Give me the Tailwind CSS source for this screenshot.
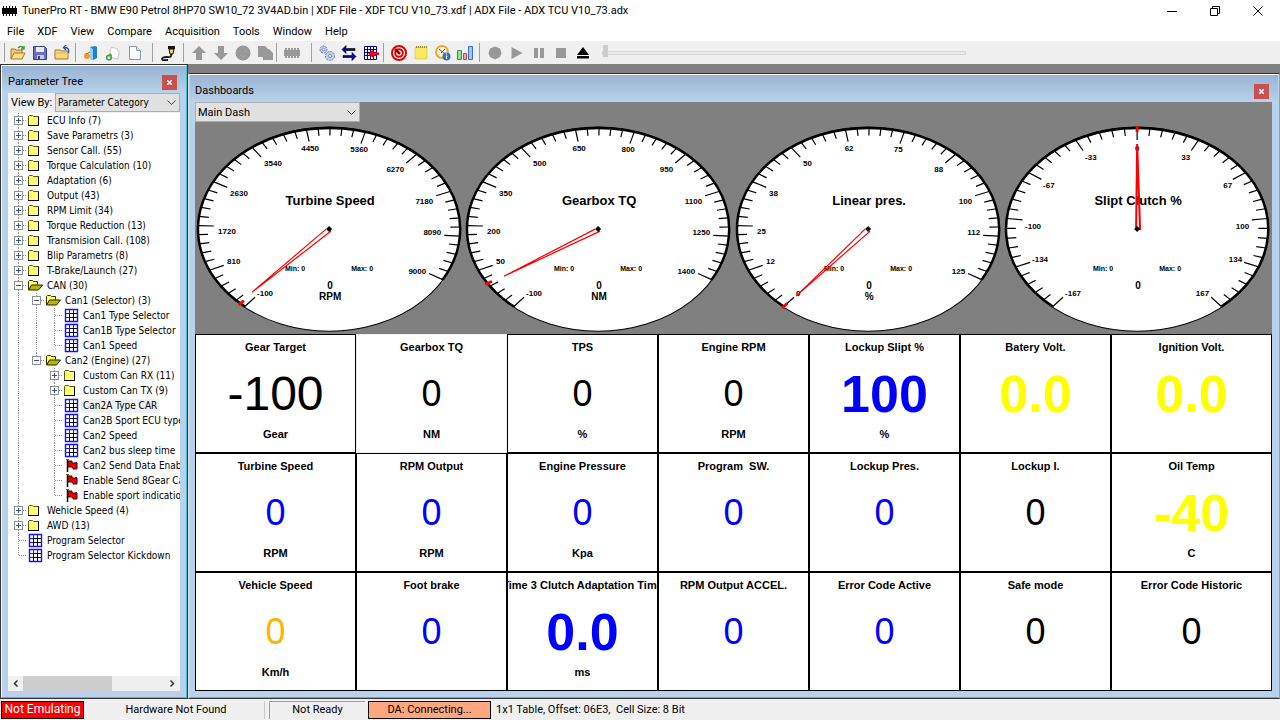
<!DOCTYPE html>
<html lang="en">
<head>
    <meta charset="UTF-8">
    <meta name="viewport" content="width=device-width, initial-scale=1.0">
    <title>TunerPro RT</title>
    <script src="https://cdn.jsdelivr.net/npm/@tailwindcss/browser@4"></script>
</head>
<body class="flex h-screen flex-col overflow-hidden bg-white font-['Roboto',sans-serif] text-[11px] leading-4 text-black">

    <!-- Title bar -->
    <header class="flex h-[22px] shrink-0 items-center">
        <svg class="ml-[2px] mr-[5px] h-4 w-[15px]" viewBox="0 0 15 16" shape-rendering="crispEdges">
            <path d="M0 5h15v6H0zM1 3h1v10H1zM4 3h1v10H4zM7 3h1v10H7zM10 3h1v10h-1zM13 3h1v10h-1z" fill="#000"/>
        </svg>
        <h1>TunerPro RT - BMW E90 Petrol 8HP70 SW10_72 3V4AD.bin | XDF File - XDF TCU V10_73.xdf | ADX File - ADX TCU V10_73.adx</h1>
        <div class="ml-auto flex">
            <button aria-label="Minimize" class="flex h-5 w-[43px] items-center justify-center">
                <svg class="h-[11px] w-[11px]" viewBox="0 0 11 11"><path d="M0 5.5h10" stroke="#000"/></svg>
            </button>
            <button aria-label="Restore" class="flex h-5 w-[43px] items-center justify-center">
                <svg class="h-[11px] w-[11px]" viewBox="0 0 11 11"><path d="M.5 2.5h7v7h-7zM2.500 2.500v-2h7v7h-2" fill="none" stroke="#000"/></svg>
            </button>
            <button aria-label="Close" class="flex h-5 w-[43px] items-center justify-center">
                <svg class="h-[11px] w-[11px]" viewBox="0 0 11 11"><path d="M.5.5l9 9M9.500.5l-9 9" stroke="#000"/></svg>
            </button>
        </div>
    </header>

    <!-- Menu -->
    <nav class="flex h-[19px] shrink-0 items-center gap-[13px] pl-[7px]">
        <button>File</button>
        <button>XDF</button>
        <button>View</button>
        <button>Compare</button>
        <button>Acquisition</button>
        <button>Tools</button>
        <button>Window</button>
        <button>Help</button>
    </nav>

    <!-- Toolbar -->
    <div id="toolbar" class="flex h-[23px] shrink-0 items-center bg-[#f0f0f0] pl-1"></div>

    <main class="flex min-h-0 flex-1 bg-[#808080]">

        <!-- Parameter tree -->
        <aside class="flex w-[188px] shrink-0 border border-[#333]">
            <div class="flex min-w-0 flex-1 flex-col border border-t-white border-r-[#3cc3dc] border-b-[#3cc3dc] border-l-white bg-[#b9d1ea] px-[6px] pb-[6px]">
                <div class="-mx-[6px] flex h-[27px] shrink-0 items-center justify-between bg-linear-to-b from-[#99b4d1] to-[#b9d1ea] pr-[9px] pl-[6px] pt-[5px]">
                    <h2>Parameter Tree</h2>
                    <button aria-label="Close parameter tree" class="flex h-[15px] w-[15px] items-center justify-center bg-[#c75050]">
                        <svg class="h-[5px] w-[5px]" viewBox="0 0 5 5"><path d="M0 0l5 5M5 0L0 5" stroke="#fff" stroke-width="1.500"/></svg>
                    </button>
                </div>
                <div class="flex h-5 shrink-0 bg-[#f0f0f0]">
                    <label for="viewBy" class="w-[47px] shrink-0 pt-[2px] pl-[3px] whitespace-nowrap">View By:</label>
                    <div class="relative flex-1">
                        <select id="viewBy" class="h-[19px] w-full appearance-none border border-[#adadad] bg-[#e1e1e1] pl-[2px] font-['DejaVu_Sans_Condensed','DejaVu_Sans',sans-serif] text-[10px]">
                            <option>Parameter Category</option>
                        </select>
                        <svg class="pointer-events-none absolute top-[7px] right-1 h-[5px] w-[9px]" viewBox="0 0 9 5"><path d="M.5.5l4 4 4-4" fill="none" stroke="#444"/></svg>
                    </div>
                </div>
                <ul id="tree" class="min-h-0 flex-1 overflow-hidden bg-white pl-px font-['DejaVu_Sans_Condensed','DejaVu_Sans',sans-serif] text-[10px]"></ul>
                <div class="flex h-[15px] shrink-0 bg-[#f0f0f0]">
                    <button aria-label="Scroll left" class="flex w-[15px] items-center justify-center">
                        <svg class="h-[7px] w-[5px]" viewBox="0 0 5 7"><path d="M4.500.5l-3 3 3 3" fill="none" stroke="#333" stroke-width="1.500"/></svg>
                    </button>
                    <div class="flex-1"><div class="h-full w-[63%] bg-[#cdcdcd]"></div></div>
                    <button aria-label="Scroll right" class="flex w-[15px] items-center justify-center">
                        <svg class="h-[7px] w-[5px]" viewBox="0 0 5 7"><path d="M.5.5l3 3-3 3" fill="none" stroke="#333" stroke-width="1.500"/></svg>
                    </button>
                </div>
            </div>
        </aside>

        <!-- Dashboards -->
        <section class="mt-[9px] flex min-w-0 flex-1 border border-t-[#333] border-r-[#3cc3dc] border-b-[#333] border-l-[#ddd]">
            <div class="flex min-w-0 flex-1 flex-col border border-t-white border-r-[#b9d1ea] border-b-[#3cc3dc] border-l-[#b9d1ea] bg-[#b9d1ea] pr-[6px] pb-[6px] pl-[5px]">
                <div class="-mr-[6px] -ml-[5px] flex h-[27px] shrink-0 items-center justify-between bg-linear-to-b from-[#99b4d1] to-[#b9d1ea] pr-[9px] pl-[5px] pt-[5px]">
                    <h2>Dashboards</h2>
                    <button aria-label="Close dashboards" class="flex h-[15px] w-[15px] items-center justify-center bg-[#c75050]">
                        <svg class="h-[5px] w-[5px]" viewBox="0 0 5 5"><path d="M0 0l5 5M5 0L0 5" stroke="#fff" stroke-width="1.500"/></svg>
                    </button>
                </div>
                <div class="flex min-h-0 flex-1 flex-col bg-[#808080]">
                    <div class="relative h-5 w-[165px] shrink-0">
                        <select aria-label="Dashboard" class="h-5 w-full appearance-none border border-[#adadad] bg-[#e1e1e1] pt-px pl-[2px]">
                            <option>Main Dash</option>
                        </select>
                        <svg class="pointer-events-none absolute top-2 right-1 h-[5px] w-[9px]" viewBox="0 0 9 5"><path d="M.5.5l4 4 4-4" fill="none" stroke="#444"/></svg>
                    </div>
                    <div id="gauges" class="grid shrink-0 grid-cols-4 font-['Liberation_Sans',sans-serif]"></div>
                    <div id="cells" class="grid min-h-0 flex-1 grid-cols-[161fr_151fr_151fr_151fr_151fr_151fr_161fr] grid-rows-3 font-['Liberation_Sans',sans-serif]"></div>
                </div>
            </div>
        </section>
    </main>

    <!-- Status bar -->
    <footer class="flex h-[21px] shrink-0 gap-1 bg-[#f0f0f0] pt-[2px] pb-px pl-px leading-4">
        <div class="w-[83px] border border-black bg-[#ff0000] text-center text-[12px] leading-[14px] text-white">Not Emulating</div>
        <div class="w-[177px] border-r border-[#c8c8c8] pt-px text-center">Hardware Not Found</div>
        <div class="w-[96px] border-t border-l border-[#a0a0a0] text-center">Not Ready</div>
        <div class="-ml-px w-[123px] border border-black bg-[#ffa880] text-center">DA: Connecting...</div>
        <div class="pt-px pl-px whitespace-pre">1x1 Table, Offset: 06E3,  Cell Size: 8 Bit</div>
    </footer>

<script>
    // Toolbar icons, all drawn on a 16x16 box
    const icons = {
        open: ['Open', '<path d="M1 14V4h4l1 1h6v3" fill="#f5c860" stroke="#a8762a"/><path d="M1 14l3-6h11l-3 6z" fill="#fce08a" stroke="#a8762a"/><path d="M8 3c2-2 4-2 5 0m1-2v3h-3" fill="none" stroke="#2f9a2f" stroke-width="1.300"/>'],
        save: ['Save', '<path d="M1.500 1.500h11l2 2v11h-13z" fill="#6a6fc0" stroke="#3c3f8f"/><path d="M4 2h8v5H4z" fill="#e8ecfa"/><path d="M5 10h7v4H5z" fill="#c8cce8"/><path d="M6 11h2v3H6z" fill="#3c3f8f"/>'],
        up: ['Open recent', '<path d="M1 14V5h5l1 1h7v8z" fill="#fbd984" stroke="#a8762a"/><path d="M1 8h13" stroke="#e0b050"/><path d="M14.500 8c1-4-1-5.500-4-5.500M12 0L9.500 2.500 12 5" fill="none" stroke="#3450a0" stroke-width="1.300"/>'],
        book: ['Definition', '<path d="M7 2l5-1 2 1v11l-4 2-3-1z" fill="#1f7fd0"/><path d="M7 2l3 2v11l-3-1z" fill="#8fd0f8"/><circle cx="4" cy="11" r="3" fill="#f59a20"/><path d="M3 9l4-2" stroke="#c06a00"/>'],
        add: ['Add', '<path d="M5 3h6l3 3v7H5z" fill="#fff" stroke="#c8c8c8" transform="rotate(14 9 8)"/><circle cx="4" cy="12.500" r="2.300" fill="none" stroke="#3ca63c" stroke-width="1.600"/><path d="M6 8l1 3-3-1z" fill="#3ca63c"/>'],
        page: ['New', '<path d="M2.500 1.500h7l4 4v9h-11z" fill="#fafcff" stroke="#8c98a8"/><path d="M9.500 1.500v4h4" fill="#dde4ee" stroke="#8c98a8"/>'],
        plug: ['Connect', '<path d="M8 1h7v3H8z" fill="#111"/><path d="M9 4h5l-1 5h-3z" fill="#e8d850" stroke="#111"/><path d="M11 9c1 4-2 3-4 3s-5 0-5 2 4 1 6 1" fill="none" stroke="#111" stroke-width="1.800"/>'],
        arrowUp: ['Upload', '<path d="M8 1l7 7h-4v7H5V8H1z" fill="#989898"/>'],
        arrowDown: ['Download', '<path d="M8 15l7-7h-4V1H5v7H1z" fill="#989898"/>'],
        verify: ['Verify', '<circle cx="8" cy="8" r="7.500" fill="#989898"/><path d="M4 6h2M9 6h3M5 10c2 2 4 2 6 0" stroke="#a8a8a8" fill="none"/>'],
        copy: ['Copy', '<path d="M1 1h7l3 3h1l4 4v7H6v-3H1z" fill="#989898"/>'],
        chip: ['Chip', '<path d="M0 5h16v6H0zM1 3h2v10H1zM4 3h2v10H4zM7 3h2v10H7zM10 3h2v10h-2zM13 3h2v10h-2z" fill="#989898"/>'],
        gears: ['Settings', '<g fill="#c3d3ee" stroke="#5e7cae"><circle cx="4.500" cy="4.500" r="3.500" stroke-dasharray="2 1"/><circle cx="11" cy="11" r="4.500" stroke-dasharray="2 1"/></g><g fill="#f0f0f0" stroke="#7e95bd"><circle cx="4.500" cy="4.500" r="1.300"/><circle cx="11" cy="11" r="1.700"/></g>'],
        swap: ['Swap', '<path d="M1 4.500l4-4v3h9v2H5v3z" fill="#0000b0" stroke="#000" stroke-width=".6"/><path d="M15 11.500l-4-4v3H2v2h9v3z" fill="#0000b0" stroke="#000" stroke-width=".6"/>'],
        table: ['Table', '<path d="M1.500 1.500h12v13h-12zM1.500 4.500h12M1.500 7.500h12M1.500 10.500h12M4.500 1.500v13M7.500 1.500v13M10.500 1.500v13" fill="#fff" stroke="#0000a8"/><path d="M5 8.500l5-4v3h6v2.500h-6v3z" fill="#f00"/>'],
        gauge: ['Dashboards', '<circle cx="8" cy="8" r="7" fill="#fff" stroke="#e00000" stroke-width="2"/><circle cx="8" cy="8" r="3.800" fill="none" stroke="#e00000" stroke-width="2"/><path d="M4 4l5 5" stroke="#900" stroke-width="2.500"/>'],
        note: ['Notes', '<path d="M2 2.500h12V14H2z" fill="#f7e763" stroke="#d8c13a" stroke-width=".6"/><path d="M3 2h11" stroke="#9a8a30" stroke-width="2" stroke-dasharray="1 1"/>'],
        monitor: ['Monitors', '<circle cx="7" cy="7" r="6" fill="#fdf6dc" stroke="#eda92c" stroke-width="2"/><path d="M4 4l6 5M10 4L6 8" stroke="#555"/><circle cx="11.500" cy="11.500" r="4" fill="#2f6fd0"/><path d="M11.500 10.500v3.500M11.500 8.500v1" stroke="#fff" stroke-width="1.300"/>'],
        chart: ['Charts', '<path d="M.5 5.500h4v9h-4z" fill="#8fe08f" stroke="#2f9a4f"/><path d="M6.500 8.500h3v6h-3z" fill="#f6a0a0" stroke="#d04040"/><path d="M11.500 1.500h4v13h-4z" fill="#9fc4f6" stroke="#3f6fc0"/>'],
        record: ['Record', '<path d="M8 1.500L13 3.500 14.500 8 13 12 8 14.500 3 12 1.500 8 3 3.500z" fill="#989898"/>'],
        play: ['Play', '<path d="M2.500 2l11 6-11 6z" fill="#989898"/>'],
        pause: ['Pause', '<path d="M3 3h4v10H3zM9 3h4v10H9z" fill="#989898"/>'],
        stop: ['Stop', '<path d="M3 3h10v10H3z" fill="#989898"/>'],
        eject: ['Eject', '<path d="M8 2l6 8H2zM2 11h12v2.500H2z" fill="#000"/>'],
    };

    const groups = [
        ['pl-[2px]', ['open', 'save', 'up']],
        ['pl-1', ['book', 'add', 'page']],
        ['pl-1', ['plug']],
        ['pl-1', ['arrowUp', 'arrowDown', 'verify', 'copy']],
        ['pl-1', ['chip']],
        ['pl-1', ['gears', 'swap', 'table']],
        ['pl-1', ['gauge', 'note', 'monitor', 'chart']],
        ['pl-1', ['record', 'play', 'pause', 'stop', 'eject']],
    ];
    // space after each group, before the next separator
    const trail = ['pr-[2px]', 'pr-[6px]', 'pr-1', 'pr-0', 'pr-2', 'pr-px', 'pr-[3px]', 'pr-2'];

    document.getElementById('toolbar').innerHTML = groups.map(([pad, names], i) => `
        <div class="flex border-l border-[#a0a0a0] ${pad} ${trail[i]}">
            ${names.map(name => `<button aria-label="${icons[name][0]}" class="flex h-[19px] w-[22px] items-center justify-center">
                <svg class="h-4 w-4" viewBox="0 0 16 16">${icons[name][1]}</svg>
            </button>`).join('')}
        </div>`).join('') + `
        <input type="range" aria-label="Playback position" min="0" max="100" value="0"
            class="h-4 w-[364px] appearance-none bg-transparent [&::-webkit-slider-runnable-track]:h-[4px] [&::-webkit-slider-runnable-track]:border [&::-webkit-slider-runnable-track]:border-[#d6d6d6] [&::-webkit-slider-runnable-track]:bg-[#e7eaea] [&::-webkit-slider-thumb]:-mt-[7px] [&::-webkit-slider-thumb]:h-[12px] [&::-webkit-slider-thumb]:w-[5px] [&::-webkit-slider-thumb]:appearance-none [&::-webkit-slider-thumb]:bg-[#cccccc]">`;

    // Tree rows: guide columns, icon, label
    // + - expander, _ expander of a last child, T branch, L last branch, | line
    const tree = [
        ['+', 'folder', 'ECU Info (7)'],
        ['+', 'folder', 'Save Parametrs (3)'],
        ['+', 'folder', 'Sensor Call. (55)'],
        ['+', 'folder', 'Torque Calculation (10)'],
        ['+', 'folder', 'Adaptation (6)'],
        ['+', 'folder', 'Output (43)'],
        ['+', 'folder', 'RPM Limit (34)'],
        ['+', 'folder', 'Torque Reduction (13)'],
        ['+', 'folder', 'Transmision Call. (108)'],
        ['+', 'folder', 'Blip Parametrs (8)'],
        ['+', 'folder', 'T-Brake/Launch (27)'],
        ['-', 'opened', 'CAN (30)'],
        ['|-', 'opened', 'Can1 (Selector) (3)'],
        ['||T', 'grid', 'Can1 Type Selector'],
        ['||T', 'grid', 'Can1B Type Selector'],
        ['||L', 'grid', 'Can1 Speed'],
        ['|_', 'opened', 'Can2 (Engine) (27)'],
        ['| +', 'folder', 'Custom Can RX (11)'],
        ['| +', 'folder', 'Custom Can TX (9)'],
        ['| T', 'grid', 'Can2A Type CAR', true],
        ['| T', 'grid', 'Can2B Sport ECU type'],
        ['| T', 'grid', 'Can2 Speed'],
        ['| T', 'grid', 'Can2 bus sleep time'],
        ['| T', 'flag', 'Can2 Send Data Enable'],
        ['| T', 'flag', 'Enable Send 8Gear Can'],
        ['| L', 'flag', 'Enable sport indication'],
        ['+', 'folder', 'Wehicle Speed (4)'],
        ['+', 'folder', 'AWD (13)'],
        ['T', 'grid', 'Program Selector'],
        ['L', 'grid', 'Program Selector Kickdown'],
    ];

    const treeIcons = {
        folder: '<path d="M1.500 3.500l1-1h3l1 1h5v9h-10z" fill="#ffff7a" stroke="#5a5a00"/><path d="M1 12.500h10.500V3.500" fill="none" stroke="#000"/>',
        opened: '<path d="M1.500 11.500v-8l1-1h3l1 1h4v3" fill="#ffff7a" stroke="#333300"/><path d="M1.500 12l3-5h11l-4 5z" fill="#b9b900" stroke="#222200"/>',
        grid: '<path d="M2.500 1.500h12v12h-12z" fill="#fff"/><path d="M6.500 5v8M10.500 5v8M6 5.500h8M6 9.500h8" stroke="#000"/><path d="M2.500 1.500h12v12h-12z" fill="none" stroke="#1414f0" stroke-width="1.400"/><path d="M2 5.500h5M2 9.500h4M6.500 1v5M10.500 1v4" stroke="#1414f0"/>',
        flag: '<path d="M4.500 2v12" stroke="#000" stroke-width="1.500"/><path d="M5 3h4v2h4v-1l1 1v6h-4v-1l-1-1H5z" fill="#e80000" stroke="#400"/><path d="M3 1.500h3" stroke="#807000"/>',
    };

    function guide(ch) {
        const up = '<path d="M9.500 0v7"/>', down = '<path d="M9.500 8v7"/>', side = '<path d="M10 7.500h8"/>';
        const box = '<path d="M5.500 3.500h8v8h-8z" fill="#fff" stroke="#919191" stroke-dasharray="none"/><path d="M7 7.500h5" stroke="#2f4fb0" stroke-dasharray="none"/>';
        const plus = '<path d="M9.500 5v5" stroke="#2f4fb0" stroke-dasharray="none"/>';
        const parts = { '|': up + down, 'T': up + down + side, 'L': up + side, '+': up + down + side + box + plus, '-': up + down + side + box, '_': up + side + box, ' ': '' };
        return `<svg class="h-[15px] w-[18px] shrink-0" viewBox="0 0 18 15" fill="none" stroke="#909090" stroke-dasharray="1 1" shape-rendering="crispEdges">${parts[ch]}</svg>`;
    }

    document.getElementById('tree').innerHTML = tree.map(([cols, icon, label, selected]) => `
        <li class="flex h-[15px] items-center whitespace-nowrap">
            ${[...cols].map(guide).join('')}
            <svg class="h-[15px] w-[18px] shrink-0" viewBox="0 0 18 15">${treeIcons[icon]}</svg>
            <span class="px-[2px] leading-[14px] ${selected ? 'bg-[#f0f0f0]' : ''}">${label}</span>
        </li>`).join('');

    // Label places around the dial, measured from the hub
    const dial = [
        [-72, 64, 'start'], [-102, 32, 'start'], [-111, 2, 'start'], [-99, -36, 'start'], [-65, -66, 'start'], [-19, -81, 'middle'],
        [30, -80, 'middle'], [75, -60, 'end'], [104, -28, 'end'], [112, 3, 'end'], [97, 42, 'end'],
    ];
    const dialWide = [
        [-72, 64, 'start'], [-105, 30, 'start'], [-112, -3, 'start'], [-94, -44, 'start'], [-52, -72, 'start'], [0, -81, 'middle'],
        [53, -72, 'end'], [95, -44, 'end'], [112, -3, 'end'], [105, 30, 'end'], [72, 64, 'end'],
    ];
    const gauges = [
        { name: 'Turbine Speed', unit: 'RPM', labels: [-100, 810, 1720, 2630, 3540, 4450, 5360, 6270, 7180, 8090, 9000], sweep: 260, places: dial, tip: [-77, 63], at: 132.6 },
        { name: 'Gearbox TQ', unit: 'NM', labels: [-100, 50, 200, 350, 500, 650, 800, 950, 1100, 1250, 1400], sweep: 260, places: dial, tip: [-94, 47], at: 147.5 },
        { name: 'Linear pres.', unit: '%', labels: [0, 12, 25, 38, 50, 62, 75, 88, 100, 112, 125], sweep: 260, places: dial, tip: [-72, 67], at: 130 },
        { name: 'Slipt Clutch %', unit: '', labels: [-167, -134, -100, -67, -33, 0, 33, 67, 100, 134, 167], sweep: 280, places: dialWide, tip: [0, -85], at: 270 },
    ];

    const RX = 131, RY = 101;
    function point(deg, k) {
        const a = deg * Math.PI / 180;
        return `${(Math.cos(a) * RX * k).toFixed(1)} ${(Math.sin(a) * RY * k).toFixed(1)}`;
    }

    document.getElementById('gauges').innerHTML = gauges.map(g => {
        let ticks = '';
        for (let i = 0; i <= 50; i++) {
            const deg = 130 + g.sweep * i / 50;
            ticks += `M${point(deg, 1)}L${point(deg, i % 5 ? 0.925 : 0.88)}`;
        }
        const base = g.at === 270 ? 'M-1 0L0 -85L3 1' : `M-3 0L${g.tip.join(' ')}L2 2`;
        return `
        <svg class="w-full" viewBox="-134 -107 269 212" text-anchor="middle" font-weight="bold">
            <ellipse rx="${RX}" ry="102" fill="#fff" stroke="#000"/>
            <path d="M${point(130, 1)}A${RX} ${RY} 0 1 1 ${point(130 + g.sweep, 1)}" fill="none" stroke="#000" stroke-width="2.500"/>
            <path d="${ticks}" stroke="#000" stroke-width="1.200"/>
            <text x="1" y="-24" font-size="13">${g.name}</text>
            ${g.labels.map((t, i) => `<text x="${g.places[i][0]}" y="${g.places[i][1] + 3}" text-anchor="${g.places[i][2]}" font-size="8">${t}</text>`).join('')}
            <text x="-34" y="42" font-size="7">Min: 0</text>
            <text x="33" y="42" font-size="7">Max: 0</text>
            <text x="1" y="60" font-size="10">0</text>
            <text x="1" y="71" font-size="10">${g.unit}</text>
            <path d="${base}" fill="none" stroke="#f00" stroke-width="${g.at === 270 ? 2 : 1.2}"/>
            <path d="M${point(g.at, 1.02)}L${point(g.at, 0.96)}" stroke="#f00" stroke-width="3"/>
            <path d="M-3 0L0 -3L3 0L0 3z"/>
        </svg>`;
    }).join('');

    // Value cells: label, value, unit, value style
    const normal = 'text-[36px]', big = 'text-[52px] font-bold';
    const cells = [
        ['Gear Target', '-100', 'Gear', 'text-[48px]'],
        ['Gearbox TQ', '0', 'NM', normal],
        ['TPS', '0', '%', normal],
        ['Engine RPM', '0', 'RPM', normal],
        ['Lockup Slipt %', '100', '%', big + ' text-[#0000ff]'],
        ['Batery Volt.', '0.0', '', big + ' text-[#ffff00]'],
        ['Ignition Volt.', '0.0', '', big + ' text-[#ffff00]'],
        ['Turbine Speed', '0', 'RPM', normal + ' text-[#0000ff]'],
        ['RPM Output', '0', 'RPM', normal + ' text-[#0000ff]'],
        ['Engine Pressure', '0', 'Kpa', normal + ' text-[#0000ff]'],
        ['Program  SW.', '0', '', normal + ' text-[#0000ff]'],
        ['Lockup Pres.', '0', '', normal + ' text-[#0000ff]'],
        ['Lockup I.', '0', '', normal],
        ['Oil Temp', '-40', 'C', big + ' text-[#ffff00]'],
        ['Vehicle Speed', '0', 'Km/h', normal + ' text-[#ffb400]'],
        ['Foot brake', '0', '', normal + ' text-[#0000ff]'],
        ['Time 3 Clutch Adaptation Time', '0.0', 'ms', big + ' text-[#0000ff]'],
        ['RPM Output ACCEL.', '0', '', normal + ' text-[#0000ff]'],
        ['Error Code Active', '0', '', normal + ' text-[#0000ff]'],
        ['Safe mode', '0', '', normal],
        ['Error Code Historic', '0', '', normal],
    ];

    document.getElementById('cells').innerHTML = cells.map(([label, value, unit, style], i) => `
        <div class="flex min-w-0 flex-col items-center overflow-hidden border bg-white pt-1 pb-3 text-[11px] font-bold whitespace-pre ${i === 1 ? 'border-[#eeeeee]' : 'border-black'}">
            <div class="h-[19px] shrink-0 leading-4">${label}</div>
            <div class="flex min-h-0 flex-1 items-center font-normal"><span class="leading-none ${style}">${value}</span></div>
            <div class="h-[11px] shrink-0 leading-[11px]">${unit}</div>
        </div>`).join('');
</script>

</body>
</html>
